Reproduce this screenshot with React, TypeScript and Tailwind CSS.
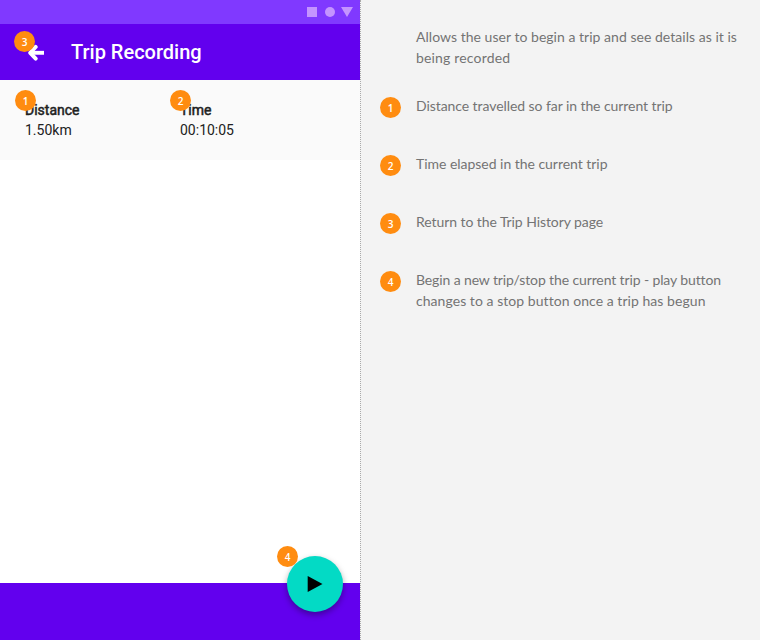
import type { ReactNode } from "react";

function Badge({ n, className = "" }: { n: number; className?: string }) {
  return (
    <span
      className={`flex size-[21px] shrink-0 items-center justify-center rounded-full bg-[#ff8c10] font-['Open_Sans',sans-serif] text-[10px] leading-none font-semibold text-white ${className}`}
    >
      {n}
    </span>
  );
}

function Note({ n, children }: { n: number; children: ReactNode }) {
  return (
    <li className="flex gap-[15px]">
      <Badge n={n} className="mt-[2px] -mb-[2px]" />
      <p>{children}</p>
    </li>
  );
}

function Stat({ n, label, value }: { n: number; label: string; value: string }) {
  return (
    <div className="relative w-[155px] text-sm leading-5 text-[#212121]">
      <div className="[-webkit-text-stroke:0.5px_#212121]">{label}</div>
      <div>{value}</div>
      <Badge n={n} className="absolute -top-[10px] -left-[10px]" />
    </div>
  );
}

export default function App() {
  return (
    <div className="flex h-[640px] w-[760px] overflow-hidden bg-[#f3f3f3]">
      <main className="flex w-[360px] shrink-0 flex-col bg-white font-['Roboto',sans-serif]">
        <div className="flex h-6 items-center justify-end bg-[#8039ff] pr-[7px]">
          <svg width="46" height="10" viewBox="0 0 46 10" fill="#c494ff">
            <rect width="10" height="10" />
            <circle cx="23" cy="5" r="5" />
            <path d="M34 0h12l-6 10z" />
          </svg>
        </div>
        <header className="flex h-14 items-center bg-[#6200ee] text-white">
          <div className="relative ml-[27px] w-11">
            <svg
              width="18"
              height="18"
              viewBox="0 0 18 18"
              fill="none"
              stroke="#fff"
              strokeWidth="3.9"
              strokeLinecap="round"
              strokeLinejoin="round"
            >
              <path d="M8.7 3.9 3.2 9.8l5.5 5.8" />
              <path d="M4 9.8h13" strokeLinecap="butt" />
            </svg>
            <Badge n={3} className="absolute -top-[12px] -left-[13px]" />
          </div>
          <h1 className="text-xl font-medium">Trip Recording</h1>
        </header>
        <section className="flex h-20 bg-[#fafafa] pt-5 pl-[25px]">
          <Stat n={1} label="Distance" value="1.50km" />
          <Stat n={2} label="Time" value="00:10:05" />
        </section>
        <footer className="relative mt-auto h-[57px] bg-[#6200ee]">
          <button className="absolute -top-[27px] right-[17px] flex size-14 items-center justify-center rounded-full bg-[#03dac5] shadow-[0_3px_6px_rgba(0,0,0,0.35)]">
            <svg width="16" height="16" viewBox="0 0 16 16">
              <path d="M0.7 0v16L15.5 8z" />
            </svg>
          </button>
          <Badge n={4} className="absolute -top-[37px] left-[277px]" />
        </footer>
      </main>
      <aside className="flex-1 border-l border-dotted border-[#aaa] pt-[26px] pl-[19px] font-['Lato',sans-serif] text-sm leading-[21px] whitespace-nowrap text-[#747474]">
        <p className="pl-9">
          <span className="tracking-[0.03px]">Allows the user to begin a trip and see details as it is</span>
          <br />
          <span className="tracking-[0.17px]">being recorded</span>
        </p>
        <ol className="mt-[27px] flex flex-col gap-[37px]">
          <Note n={1}>
            <span className="tracking-[-0.07px]">Distance travelled so far in the current trip</span>
          </Note>
          <Note n={2}>
            <span className="tracking-[-0.03px]">Time elapsed in the current trip</span>
          </Note>
          <Note n={3}>
            <span className="tracking-[-0.07px]">Return to the Trip History page</span>
          </Note>
          <Note n={4}>
            <span className="tracking-[-0.12px]">Begin a new trip/stop the current trip - play button</span>
            <br />
            <span className="tracking-[0.05px]">changes to a stop button once a trip has begun</span>
          </Note>
        </ol>
      </aside>
    </div>
  );
}
